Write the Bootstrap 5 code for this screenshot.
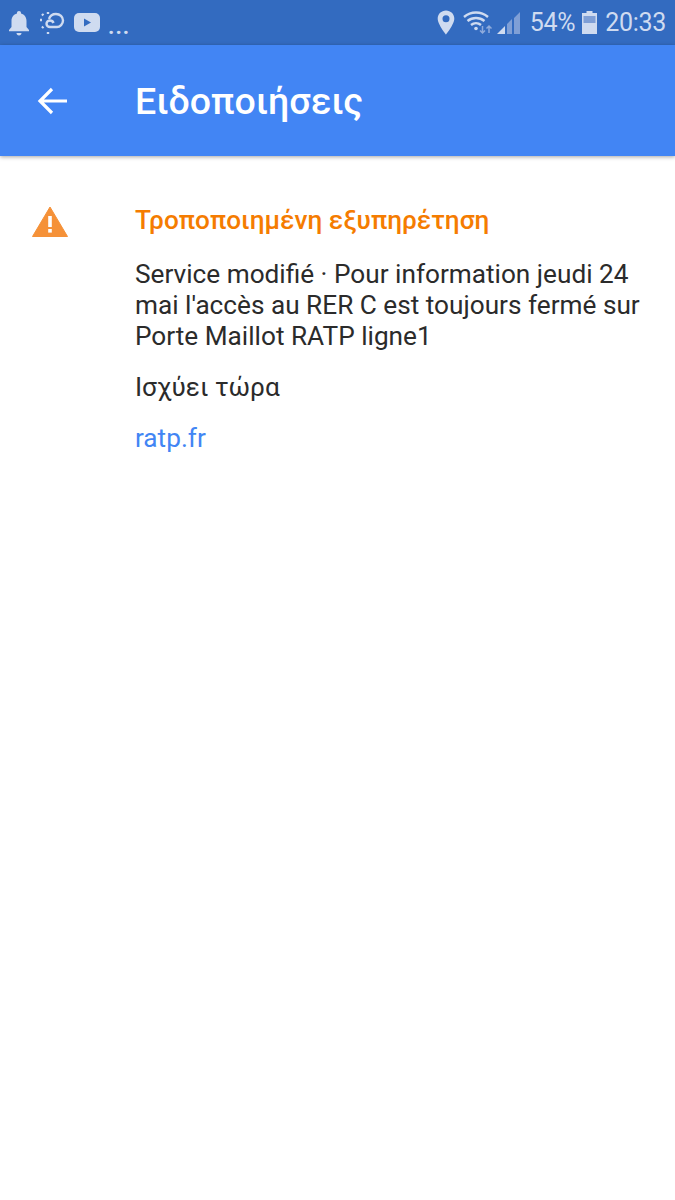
<!DOCTYPE html>
<html lang="el">
<head>
    <meta charset="UTF-8">
    <meta name="viewport" content="width=device-width, initial-scale=1.0">
    <title>Ειδοποιήσεις</title>
    <link href="https://cdn.jsdelivr.net/npm/bootstrap@5.3.0/dist/css/bootstrap.min.css" rel="stylesheet">
    <style>
        html, body { height: 100%; }
        body { font-family: Roboto, "Noto Sans", sans-serif; background: #fff; color: #2b2b2b; }
        .status-strip { height: 45px; background: #336bc0; color: #cfdbf0; padding: 0 9px 0 8px; }
        .status-text { font-size: 25px; line-height: 45px; letter-spacing: -.3px; }
        .status-pct { margin: 0 7px 0 9px; }
        .status-dots { font-size: 22px; line-height: 1; margin-top: 9px; letter-spacing: 1px; font-weight: 700; }
        .app-head { height: 111px; background: #4285f4; color: #fff; box-shadow: 0 1px 4px rgba(0,0,0,.35); padding-left: 37px; }
        .app-title { font-size: 37.5px; line-height: 1; margin: 3px 0 0 67px; font-weight: 500; }
        .notice-row { padding: 49px 30px 0 32px; }
        .notice-ico { width: 103px; flex: none; padding-top: 1px; }
        .notice-ico svg { display: block; }
        .notice-title { font-size: 26.2px; line-height: 30px; font-weight: 500; color: #f57c00; margin: 0 0 24px; }
        .notice-body { font-size: 26.2px; line-height: 31px; margin: 0 0 20px; }
        .notice-link { font-size: 26.2px; line-height: 31px; color: #4285f4; text-decoration: none; }
    </style>
</head>
<body>
    <!-- status bar -->
    <div class="status-strip d-flex align-items-center justify-content-between">
        <div class="d-flex align-items-center">
            <svg width="22" height="26" viewBox="0 0 22 26" fill="#cfdbf0" class="me-2"><path d="M11 1c1.300 0 2 .9 2 2v.6c3.500 1 5.500 3.900 5.500 7.400v6l2.500 3v1.200H1V20l2.500-3v-6c0-3.500 2-6.400 5.500-7.400V3c0-1.100.7-2 2-2z"/><path d="M8.500 23h5c0 1.500-1.100 2.500-2.500 2.500S8.500 24.500 8.500 23z"/></svg>
            <svg width="28" height="24" viewBox="0 0 28 24" fill="none" stroke="#cfdbf0" stroke-width="2.400" class="me-2"><path d="M11 8c1-3 4-5 7-5 4 0 7 3 7 6.500S22 16 19 16h-7c-2 0-3.500-1.500-3.500-3.300s1.500-3.200 3.500-3.200 3 1 3.500 2.500"/><path d="M10 1v3M2 9h3M10 21v3M4 3l2 2M4 17l2-2" stroke-dasharray="2 1"/></svg>
            <svg width="26" height="19" viewBox="0 0 26 19" class="me-2"><rect width="26" height="19" rx="5" fill="#cfdbf0"/><path d="M10 5.500l7 4-7 4z" fill="#336bc0"/></svg>
            <span class="status-dots">...</span>
        </div>
        <div class="d-flex align-items-center">
            <svg width="18" height="25" viewBox="0 0 18 25" fill="#cfdbf0"><path fill-rule="evenodd" d="M9 .5c4.700 0 8.300 3.600 8.300 8.200 0 5.500-8.300 15.800-8.300 15.800S.7 14.200.7 8.700C.7 4.100 4.300.5 9 .5zm0 4.800a3.500 3.500 0 1 0 0 7 3.500 3.500 0 0 0 0-7z"/></svg>
            <svg width="30" height="24" viewBox="0 0 30 24" fill="none" stroke="#cfdbf0" stroke-width="2.400" class="ms-2"><path d="M1 6c7-6 17-6 24 0M4.500 10c5-4 12-4 17 0M8 14c3-2.500 7-2.500 10 0"/><circle cx="13" cy="17.500" r="1.800" fill="#cfdbf0" stroke="none"/><path d="M19.500 15v7M17 19.500l2.500 2.500 2.500-2.500" stroke="#8fabdc" stroke-width="1.500"/><path d="M26 22v-7M23.500 17.500L26 15l2.500 2.500" stroke="#8fabdc" stroke-width="1.500"/></svg>
            <svg width="24" height="22" viewBox="0 0 24 22" class="ms-1"><path d="M17 6l6-6v22h-6zM10 12l5-5v15h-5z" fill="#7f9fd6"/><path d="M8 14v8H0z" fill="#cfdbf0"/></svg>
            <span class="status-text status-pct">54%</span>
            <svg width="15" height="23" viewBox="0 0 15 23" class="me-2"><path d="M4.500 0h6v2H15v21H0V2h4.500z" fill="#cfdbf0"/><rect x="1.500" y="5" width="12" height="7" fill="#7f9fd6"/></svg>
            <span class="status-text">20:33</span>
        </div>
    </div>

    <!-- app bar -->
    <header class="app-head d-flex align-items-center">
        <svg width="31" height="28" viewBox="0 0 31 28" fill="none" stroke="#fff" stroke-width="3.200"><path d="M30 14H3M15 2L3 14l12 12"/></svg>
        <h1 class="app-title">Ειδοποιήσεις</h1>
    </header>

    <!-- alert -->
    <main class="notice-row d-flex">
        <div class="notice-ico">
            <svg width="36" height="31" viewBox="0 0 36 31"><path d="M18 1L35.500 30.500H.5z" fill="#f59138" stroke="#f59138" stroke-linejoin="round"/><rect x="16.200" y="10" width="3.600" height="11" fill="#fff"/><rect x="16.200" y="23" width="3.600" height="3.600" fill="#fff"/></svg>
        </div>
        <div>
            <h2 class="notice-title">Τροποποιημένη εξυπηρέτηση</h2>
            <p class="notice-body">Service modifié · Pour information jeudi 24 mai l'accès au RER C est toujours fermé sur Porte Maillot RATP ligne1</p>
            <p class="notice-body">Ισχύει τώρα</p>
            <a class="notice-link" href="#">ratp.fr</a>
        </div>
    </main>
    <script src="https://cdn.jsdelivr.net/npm/bootstrap@5.3.0/dist/js/bootstrap.bundle.min.js"></script>
</body>
</html>
